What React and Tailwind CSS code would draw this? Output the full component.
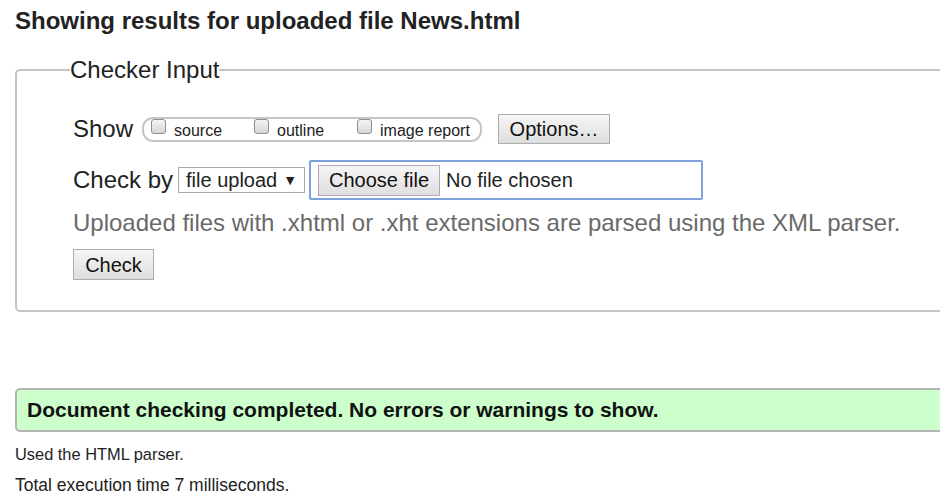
export default function App() {
  const Box = () => (
    <span className="inline-block w-[15px] h-[15px] rounded-[3px] border border-[#8f8f8f] bg-gradient-to-b from-[#f4f4f4] to-[#d6d6d6] mr-[8px] relative top-[-5px]" />
  );
  return (
    <div className="w-[940px] h-[501px] overflow-hidden bg-white text-[#222] font-['Liberation_Sans',Arial,sans-serif]">
      <h2 className="text-[24px] font-bold leading-[28px] pl-[15px] pt-[7px] text-[#222]">
        Showing results for uploaded file News.html
      </h2>
      <fieldset className="ml-[15px] mt-[21px] w-[1000px] border-2 border-[#c6c6c6] rounded-[5px] pl-[56px] pt-[30px] pb-[30px]">
        <legend className="text-[24px] leading-[28px] -ml-[3px] px-0">Checker Input</legend>
        <div className="flex items-center h-[30px]">
          <span className="text-[24px] leading-[28px] mr-[9px]">Show</span>
          <div className="flex items-center h-[25px] w-[340px] border-2 border-[#c6c6c6] rounded-[11px] pl-[7px] text-[16px]">
            <label className="flex items-center w-[103px] relative top-[2px]"><Box />source</label>
            <label className="flex items-center w-[103px] relative top-[2px]"><Box />outline</label>
            <label className="flex items-center relative top-[2px]"><Box />image report</label>
          </div>
          <button className="ml-[16px] h-[30px] w-[112px] border border-[#adadad] bg-gradient-to-b from-[#f6f6f6] to-[#dedede] text-[20px] leading-[24px] text-[#111]">
            Options…
          </button>
        </div>
        <div className="flex items-center h-[40px] mt-[16px]">
          <span className="text-[24px] leading-[28px] mr-[5px]">Check by</span>
          <div className="flex items-center justify-between h-[26px] w-[127px] border border-[#a9a9a9] bg-white px-[7px] text-[20px] leading-[24px]">
            <span>file upload</span>
            <span className="text-[14px]">▼</span>
          </div>
          <div className="ml-[4px] flex items-center h-[40px] w-[394px] border-2 border-[#7da2dc] rounded-[2px] pl-[7px] text-[20px] leading-[24px]">
            <span className="flex items-center justify-center h-[31px] w-[122px] border border-[#adadad] bg-gradient-to-b from-[#f6f6f6] to-[#dedede] text-[#111]">
              Choose file
            </span>
            <span className="ml-[6px]">No file chosen</span>
          </div>
        </div>
        <p className="text-[24px] leading-[28px] text-[#6a6a6a] mt-[9px]">
          Uploaded files with .xhtml or .xht extensions are parsed using the XML parser.
        </p>
        <button className="mt-[12px] h-[31px] w-[81px] border border-[#adadad] bg-gradient-to-b from-[#f6f6f6] to-[#dedede] text-[20px] leading-[24px] text-[#111]">
          Check
        </button>
      </fieldset>
      <div className="ml-[15px] mt-[76px] w-[1000px] h-[44px] flex items-center border-2 border-[#b4b4b4] rounded-[5px] bg-[#ccffcc] pl-[10px]">
        <span className="text-[21px] font-bold text-[#111]">Document checking completed. No errors or warnings to show.</span>
      </div>
      <p className="ml-[15px] mt-[10px] text-[16.4px] leading-[24px]">Used the HTML parser.</p>
      <p className="ml-[15px] mt-[7px] text-[17.5px] leading-[24px]">Total execution time 7 milliseconds.</p>
    </div>
  );
}
